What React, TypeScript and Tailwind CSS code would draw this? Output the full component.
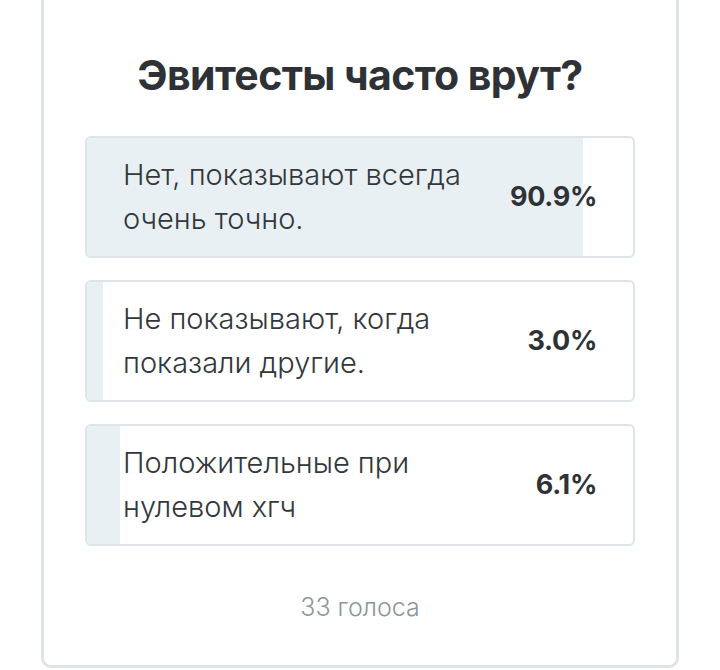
import React from "react";

const options = [
  { text: ["Нет, показывают всегда", "очень точно."], pct: 90.9 },
  { text: ["Не показывают, когда", "показали другие."], pct: 3.0 },
  { text: ["Положительные при", "нулевом хгч"], pct: 6.1 },
];

export default function App() {
  return (
    <div className="w-[720px] h-[670px] bg-white" style={{ fontFamily: "Inter, 'Noto Sans', sans-serif" }}>
      <div className="mx-[41px] border-x-[3px] border-b-[3px] border-[#dde5e8] rounded-b-[10px] px-[41px] pb-[42px] flex flex-col">
        <h1 className="mt-[51px] text-center text-[41px] leading-[48px] font-bold text-[#2e3236] tracking-[-0.6px]">
          Эвитесты часто врут?
        </h1>
        <div className="mt-[37px] flex flex-col gap-[22px]">
          {options.map((o, i) => (
            <div
              key={i}
              className="relative h-[122px] border-2 border-[#dde5e8] rounded-[6px] overflow-hidden bg-white"
            >
              <div className="absolute left-0 top-0 bottom-0 bg-[#e9f0f3]" style={{ width: `${o.pct}%` }} />
              <div className="relative h-full flex items-center justify-between pl-[36px] pr-[36px]">
                <div className="text-[29px] leading-[44px] text-[#33373b] font-light">
                  <div>{o.text[0]}</div>
                  <div>{o.text[1]}</div>
                </div>
                <div className="text-[27px] font-bold text-[#2e3236] tracking-[-0.3px]">{o.pct.toFixed(1)}%</div>
              </div>
            </div>
          ))}
        </div>
        <div className="mt-[45px] text-center text-[25px] leading-[32px] text-[#8c969c] font-light">33 голоса</div>
      </div>
    </div>
  );
}
